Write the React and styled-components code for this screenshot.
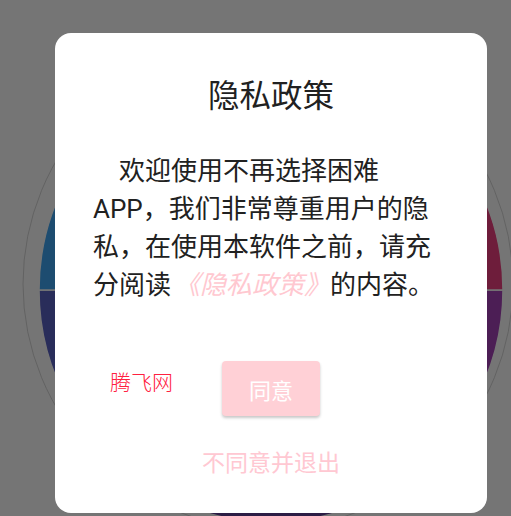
import React from "react";
import styled, { createGlobalStyle } from "styled-components";

const GlobalStyle = createGlobalStyle`
  html, body {
    margin: 0;
    padding: 0;
    background: #ffffff;
  }
  body {
    font-family: "Roboto", "Noto Sans CJK SC", sans-serif;
  }
`;

const Page = styled.div`
  position: relative;
  width: 511px;
  height: 516px;
  overflow: hidden;
  background: #ffffff;
  padding: 40px 0 0 21px;
  box-sizing: border-box;
`;

const Backdrop = styled.div`
  position: absolute;
  inset: 0;
  background: rgba(0, 0, 0, 0.54);
  display: flex;
  justify-content: flex-start;
  align-items: flex-start;
  padding: 33px 0 0 55px;
  box-sizing: border-box;
`;

const Dialog = styled.div`
  width: 432px;
  height: 480px;
  background: #ffffff;
  border-radius: 16px;
  display: flex;
  flex-direction: column;
  align-items: center;
  padding: 44px 37px 0;
  box-sizing: border-box;
`;

const Title = styled.h2`
  margin: 0;
  font-family: "Roboto", "Noto Sans CJK SC", sans-serif;
  font-weight: 400;
  font-size: 31.5px;
  line-height: 40px;
  color: #212121;
`;

const Body = styled.p`
  margin: 35px 0 0;
  align-self: stretch;
  padding-left: 1px;
  font-size: 26px;
  line-height: 38px;
  text-indent: 26px;
  color: #212121;
`;

const Link = styled.span`
  display: inline-block;
  text-indent: 0;
  padding-left: 3px;
  font-style: italic;
  color: #ffc8d0;
`;

const Actions = styled.div`
  margin-top: 57px;
  width: 432px;
  display: grid;
  grid-template-columns: 1fr auto 1fr;
  align-items: center;
`;

const Mark = styled.span`
  padding-left: 55px;
  font-family: "Noto Sans CJK SC", sans-serif;
  font-weight: 300;
  font-size: 21px;
  color: #ff2040;
  transform: translateY(-8px);
`;

const AgreeButton = styled.button`
  width: 98px;
  height: 55px;
  border: none;
  border-radius: 4px;
  background: #ffd0d6;
  color: #ffffff;
  font-family: "Roboto", "Noto Sans CJK SC", sans-serif;
  font-size: 22px;
  box-shadow: 0 2px 3px rgba(0, 0, 0, 0.22);
  cursor: pointer;
`;

const Refuse = styled.div`
  margin-top: 33px;
  font-size: 23px;
  line-height: 30px;
  color: #ffc8d2;
`;

const slices = [
  "#a743b9",
  "#603f96",
  "#5b62c4",
  "#41a7f3",
  "#ffb74d",
  "#ef4182",
];

const Wheel = () => {
  const cx = 250;
  const cy = 250;
  const r = 232;
  const pt = (deg) => {
    const a = (deg * Math.PI) / 180;
    return [cx + r * Math.cos(a), cy + r * Math.sin(a)];
  };
  return (
    <svg width="500" height="500" viewBox="0 0 500 500">
      <circle cx={cx - 3} cy={cy - 6} r="245" fill="none" stroke="#d6d6d6" strokeWidth="1" />
      {slices.map((c, i) => {
        const [x1, y1] = pt(i * 60);
        const [x2, y2] = pt(i * 60 + 60);
        return (
          <path
            key={i}
            d={`M${cx},${cy} L${x1},${y1} A${r},${r} 0 0 1 ${x2},${y2} Z`}
            fill={c}
            stroke="#ffffff"
            strokeWidth="1.5"
          />
        );
      })}
    </svg>
  );
};

export default function App() {
  return (
    <>
      <GlobalStyle />
      <Page>
        <Wheel />
        <Backdrop>
          <Dialog>
            <Title>隐私政策</Title>
            <Body>
              欢迎使用不再选择困难APP，我们非常尊重用户的隐私，在使用本软件之前，请充分阅读<Link>《隐私政策》</Link>的内容。
            </Body>
            <Actions>
              <Mark>腾飞网</Mark>
              <AgreeButton>同意</AgreeButton>
              <span />
            </Actions>
            <Refuse>不同意并退出</Refuse>
          </Dialog>
        </Backdrop>
      </Page>
    </>
  );
}
